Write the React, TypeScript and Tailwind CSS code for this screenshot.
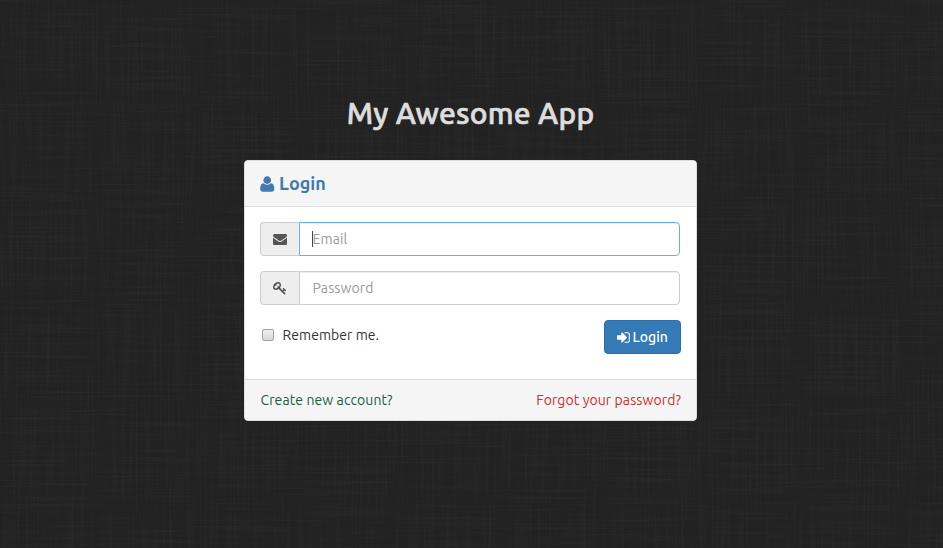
import type { ReactNode } from "react";

const USER =
  "M1408 1405q0 120-73 189.5t-194 69.5h-874q-121 0-194-69.5t-73-189.5q0-53 3.5-103.5t14-109 26.5-108.5 43-97.5 62-81 85.5-53.5 111.5-20q9 0 42 21.5t74.5 48 108 48 133.5 21.5 133.5-21.5 108-48 74.5-48 42-21.5q61 0 111.5 20t85.5 53.5 62 81 43 97.5 26.5 108.5 14 109 3.5 103.5zm-320-893q0 159-112.5 271.5t-271.5 112.5-271.5-112.5-112.5-271.5 112.5-271.5 271.5-112.5 271.5 112.5 112.5 271.5z";
const ENVELOPE =
  "M1792 710v794q0 66-47 113t-113 47h-1472q-66 0-113-47t-47-113v-794q44 49 101 87 362 246 497 345 57 42 92.5 65.5t94.5 48 110 24.5h2q51 0 110-24.5t94.5-48 92.5-65.5q170-123 498-345 57-39 100-87zm0-294q0 79-49 151t-122 123q-376 261-468 325-10 7-42.5 31t-54 38.5-52 32.5-57.5 27-50 9h-2q-23 0-50-9t-57.5-27-52-32.5-54-38.5-42.5-31q-91-64-262-182.5t-205-142.5q-62-42-117-115.5t-55-136.5q0-78 41.5-130t118.5-52h1472q65 0 112.5 47t47.5 113z";
const KEY =
  "M832 512q0-80-56-136t-136-56-136 56-56 136q0 42 19 83-41-19-83-19-80 0-136 56t-56 136 56 136 136 56 136-56 56-136q0-42-19-83 41 19 83 19 80 0 136-56t56-136zm851 704q0 17-49 66t-66 49q-9 0-28.5-16t-36.5-33-38.5-40-24.5-26l-96 96 220 220q28 28 28 68 0 42-39 81t-81 39q-40 0-68-28l-671-671q-176 131-365 131-163 0-265.5-102.5t-102.5-265.5q0-160 95-313t248-248 313-95q163 0 265.5 102.5t102.5 265.5q0 189-131 365l355 355 96-96q-3-3-26-24.5t-40-38.5-33-36.5-16-28.5q0-17 49-66t66-49q13 0 23 10 6 6 46 44.5t82 79.5 86.5 86 73 78 28.5 41z";
const SIGN_IN =
  "M1184 896q0 26-19 45l-544 544q-19 19-45 19t-45-19-19-45v-288h-448q-26 0-45-19t-19-45v-384q0-26 19-45t45-19h448v-288q0-26 19-45t45-19 45 19l544 544q19 19 19 45zm352-352v704q0 119-84.5 203.5t-203.5 84.5h-320q-13 0-22.5-9.5t-9.5-22.5q0-4-1-20t-.5-26.5 3-23.5 10-19.5 20.5-6.5h320q66 0 113-47t47-113v-704q0-66-47-113t-113-47h-312l-11.5-1-11.5-3-8-5.5-7-9-2-13.5q0-4-1-20t-.5-26.5 3-23.5 10-19.5 20.5-6.5h320q119 0 203.5 84.5t84.5 203.5z";

function Icon({ d, width, className }: { d: string; width: number; className: string }) {
  return (
    <svg viewBox={`0 0 ${width} 1792`} fill="currentColor" className={`shrink-0 ${className}`}>
      <path d={d} />
    </svg>
  );
}

// Woven linen backdrop: stretched noise in both directions over charcoal.
function Linen() {
  return (
    <svg className="absolute inset-0 h-full w-full" aria-hidden="true">
      <filter id="weft" x="0" y="0" width="100%" height="100%" colorInterpolationFilters="sRGB">
        <feTurbulence type="fractalNoise" baseFrequency="0.01 0.5" numOctaves={2} seed={4} />
        <feColorMatrix values="0 0 0 0 0.3  0 0 0 0 0.3  0 0 0 0 0.3  1.6 0 0 0 -0.7" />
      </filter>
      <filter id="warp" x="0" y="0" width="100%" height="100%" colorInterpolationFilters="sRGB">
        <feTurbulence type="fractalNoise" baseFrequency="0.5 0.01" numOctaves={2} seed={9} />
        <feColorMatrix values="0 0 0 0 0.3  0 0 0 0 0.3  0 0 0 0 0.3  1.6 0 0 0 -0.7" />
      </filter>
      <rect width="100%" height="100%" fill="#222222" />
      <rect width="100%" height="100%" filter="url(#weft)" opacity="0.18" />
      <rect width="100%" height="100%" filter="url(#warp)" opacity="0.18" />
    </svg>
  );
}

function Addon({ children }: { children: ReactNode }) {
  return (
    <span className="flex w-[39px] items-center justify-center rounded-l border border-r-0 border-[#cccccc] bg-[#eeeeee] text-[#555555]">
      {children}
    </span>
  );
}

export default function App() {
  return (
    <div className="relative isolate h-[548px] w-full overflow-hidden bg-[#222222] font-['Ubuntu','Noto_Sans',sans-serif] text-sm text-[#333333]">
      <div className="absolute inset-0 -z-10">
        <Linen />
      </div>
      <main className="ml-[244px] w-[453px] pt-[93px]">
        <h1 className="mb-[27px] text-center text-[30px] leading-10 font-medium tracking-[0.2px] whitespace-nowrap text-[#dddddd] [-webkit-text-stroke:0.7px_#dddddd]">
          <span>My Awesome App</span>
        </h1>
        <section className="h-[261px] rounded border border-[#dddddd] bg-white">
          <header className="flex h-[46px] items-center rounded-t-[3px] border-b border-[#dddddd] bg-[#f5f5f5] px-[15px] text-[#4179b0]">
            <Icon d={USER} width={1408} className="h-[18px] w-[14.5px]" />
            <h2 className="-mt-px ml-[4.5px] text-[18px] leading-5 font-bold">Login</h2>
          </header>
          <form className="h-[172px] px-[15px] pt-[15px]">
            <div className="mb-[15px] flex h-[34px] w-[420px]">
              <Addon>
                <Icon d={ENVELOPE} width={1792} className="h-[14px] w-[14px]" />
              </Addon>
              <div className="flex flex-1 items-center rounded-r border border-[#66afe9] pl-[12px] shadow-[inset_0_1px_1px_rgba(0,0,0,0.075)]">
                <span className="h-4 w-px bg-[#444444]" />
                <span className="-ml-[0.5px] tracking-[0.1px] text-[#999999]">Email</span>
              </div>
            </div>
            <div className="mb-[15px] flex h-[34px] w-[420px]">
              <Addon>
                <Icon d={KEY} width={1792} className="h-[14px] w-[14px]" />
              </Addon>
              <div className="flex flex-1 items-center rounded-r border border-[#cccccc] pl-[12.5px] tracking-[0.1px] text-[#999999] shadow-[inset_0_1px_1px_rgba(0,0,0,0.075)]">
                <span>Password</span>
              </div>
            </div>
            <div className="flex items-start justify-between">
              <label className="ml-[2px] flex h-[30px] items-center">
                <span className="h-[12px] w-[12px] rounded-[2px] border border-[#a0a0a0] bg-linear-to-b from-[#eeeeee] to-[#d9d9d9]" />
                <span className="ml-[8.5px] tracking-[0.05px]">Remember me.</span>
              </label>
              <button
                type="button"
                className="flex h-[34px] w-[77px] items-center rounded border border-[#2e6da4] bg-[#337ab7] pl-[12px] font-medium text-white"
              >
                <Icon d={SIGN_IN} width={1536} className="h-[15px] w-[12.9px]" />
                <span className="ml-[2.5px]">Login</span>
              </button>
            </div>
          </form>
          <footer className="flex h-[41px] items-center justify-between rounded-b-[3px] border-t border-[#dddddd] bg-[#f5f5f5] pr-[15px] pl-[15.5px] tracking-[0.1px]">
            <a className="text-[#1d5c3f]">Create new account?</a>
            <a className="text-[#c9302c]">Forgot your password?</a>
          </footer>
        </section>
      </main>
    </div>
  );
}
